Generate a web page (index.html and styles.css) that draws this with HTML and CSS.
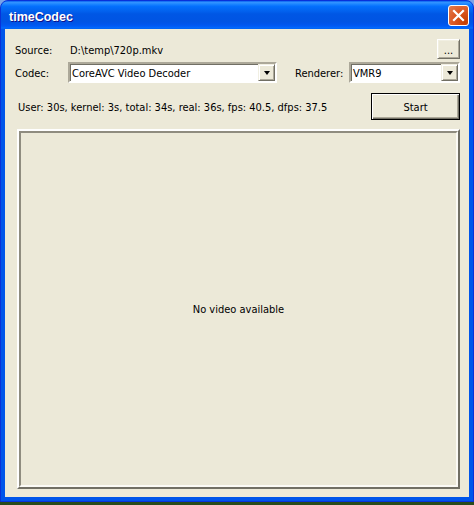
FILE: index.html
```html
<!DOCTYPE html>
<html>
<head>
<meta charset="utf-8">
<title>timeCodec</title>
<link rel="stylesheet" href="styles.css">
</head>
<body>
<div class="window">
  <div class="titlebar">
    <span class="title">timeCodec</span>
    <div class="close" aria-label="Close">
      <svg width="13" height="13" viewBox="0 0 13 13"><path d="M2 2 L11 11 M11 2 L2 11" stroke="#fff" stroke-width="2.2" stroke-linecap="square"/></svg>
    </div>
  </div>
  <div class="client">
    <div class="row row-source">
      <span class="label lbl-source">Source:</span>
      <span class="path">D:\temp\720p.mkv</span>
      <span class="spacer"></span>
      <div class="btn btn-browse">...</div>
    </div>
    <div class="row row-combo">
      <span class="label lbl-codec">Codec:</span>
      <div class="combo combo-codec">
        <span class="combo-text">CoreAVC Video Decoder</span>
        <div class="drop"><span class="arrow"></span></div>
      </div>
      <span class="label lbl-renderer">Renderer:</span>
      <div class="combo combo-renderer">
        <span class="combo-text">VMR9</span>
        <div class="drop"><span class="arrow"></span></div>
      </div>
    </div>
    <div class="row row-status">
      <span class="status">User: 30s, kernel: 3s, total: 34s, real: 36s, fps: 40.5, dfps: 37.5</span>
      <span class="spacer"></span>
      <div class="btn btn-default btn-start">Start</div>
    </div>
    <div class="panel">
      <div class="panel-inner">No video available</div>
    </div>
  </div>
</div>
</body>
</html>
```
FILE: styles.css
```css
html, body {
  margin: 0;
  padding: 0;
}
body {
  width: 474px;
  height: 505px;
  overflow: hidden;
  background: linear-gradient(#7aa4e8 0px, #5a86d8 200px, #2f5a22 270px, #2a4a1c 505px);
  font-family: Tahoma, "DejaVu Sans Condensed", "Liberation Sans", sans-serif;
  font-size: 11px;
  color: #000;
}
.window {
  box-sizing: border-box;
  width: 474px;
  height: 502px;
  border: 1px solid #0831d9;
  border-radius: 8px 8px 0 0;
  background: #0055ea;
  display: flex;
  flex-direction: column;
  overflow: hidden;
}
.titlebar {
  height: 28px;
  flex: none;
  box-sizing: border-box;
  padding: 4px 4px 0 8px;
  display: flex;
  justify-content: space-between;
  align-items: flex-start;
  background: linear-gradient(#0058ee 0%, #3593ff 4%, #288eff 8%, #127dff 14%, #036ffc 20%, #0262ee 36%, #0057e5 46%, #0054e3 72%, #0055eb 82%, #005bf5 90%, #026afe 96%, #0062ef 100%);
}
.title {
  font-family: "Trebuchet MS", "Liberation Sans", sans-serif;
  font-weight: bold;
  font-size: 12.5px;
  line-height: 13px;
  margin-top: 6px;
  color: #fff;
  text-shadow: 1px 1px #0f1089;
}
.close {
  box-sizing: border-box;
  width: 21px;
  height: 21px;
  border: 1px solid #fff;
  border-radius: 3px;
  background: radial-gradient(circle at 85% 85%, #c63d00 0%, #dc5a26 55%, #e07d50 100%);
  display: flex;
  align-items: center;
  justify-content: center;
}
.close svg {
  display: block;
}
.client {
  flex: 1;
  margin: 0 4px 4px 4px;
  background: #ece9d8;
  box-sizing: border-box;
  padding: 10px 9px 8px 10px;
  display: flex;
  flex-direction: column;
}
.row {
  display: flex;
  align-items: center;
}
.label, .path, .status, .combo-text {
  padding-top: 2px;
}
.spacer {
  flex: 1;
}
.row-source {
  height: 20px;
}
.lbl-source {
  width: 55px;
}
.row-combo {
  height: 21px;
  margin-top: 3px;
}
.lbl-codec {
  width: 53px;
}
.lbl-renderer {
  width: 54px;
  margin-left: 18px;
}
.combo {
  box-sizing: border-box;
  height: 21px;
  background: #fff;
  border: 2px solid;
  border-color: #aca899 #fff #fff #aca899;
  box-shadow: inset 1px 1px #716f64;
  display: flex;
  align-items: center;
  padding-left: 2px;
}
.combo-codec {
  width: 209px;
}
.combo-renderer {
  width: 111px;
}
.combo-text {
  flex: 1;
  white-space: nowrap;
}
.drop {
  box-sizing: border-box;
  width: 17px;
  height: 17px;
  background: #ece9d8;
  border: 1px solid;
  border-color: #f1efe2 #716f64 #716f64 #f1efe2;
  box-shadow: inset 1px 1px #fff, inset -1px -1px #aca899;
  display: flex;
  align-items: center;
  justify-content: center;
}
.arrow {
  width: 0;
  height: 0;
  border-left: 3.5px solid transparent;
  border-right: 3.5px solid transparent;
  border-top: 4px solid #000;
  margin-top: 1px;
}
.row-status {
  height: 27px;
  margin-top: 10px;
}
.status {
  padding-left: 3px;
  white-space: nowrap;
}
.btn {
  box-sizing: border-box;
  background: #ece9d8;
  border: 1px solid;
  border-color: #fff #716f64 #716f64 #fff;
  box-shadow: inset 1px 1px #f1efe2, inset -1px -1px #aca899;
  display: flex;
  align-items: center;
  justify-content: center;
}
.btn-browse {
  width: 23px;
  height: 20px;
  padding-top: 2px;
}
.btn-default {
  border: 1px solid #000;
  box-shadow: inset 1px 1px #fff, inset -1px -1px #716f64, inset -2px -2px #aca899;
  padding-top: 2px;
}
.btn-start {
  width: 89px;
  height: 27px;
}
.panel {
  margin: 9px 0 0 2px;
  width: 443px;
  height: 360px;
  box-sizing: border-box;
  border: 2px solid;
  border-color: #fff #716f64 #716f64 #fff;
}
.panel-inner {
  box-sizing: border-box;
  height: 100%;
  border: 2px solid;
  border-color: #8f8c7f #fbfaf5 #fbfaf5 #8f8c7f;
  display: flex;
  align-items: center;
  justify-content: center;
}
```
